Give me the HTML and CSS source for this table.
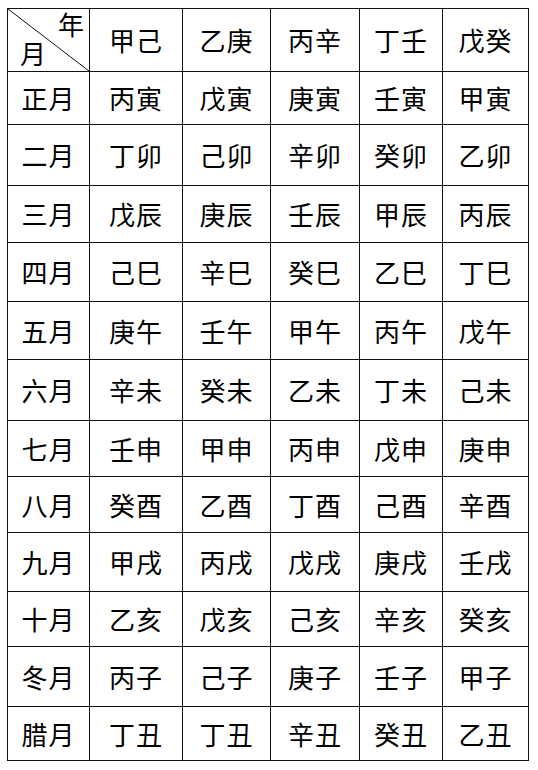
FILE: index.html
```html
<!DOCTYPE html>
<html lang="zh-CN">
<head>
<meta charset="utf-8">
<title>月干支表</title>
<link rel="stylesheet" href="styles.css">
</head>
<body>
<table class="grid">
  <colgroup>
    <col class="c1"><col class="c2"><col class="c3"><col class="c4"><col class="c5"><col class="c6">
  </colgroup>
  <tbody>
    <tr>
      <td class="corner">
        <svg class="diag" viewBox="0 0 100 100" preserveAspectRatio="none" aria-hidden="true"><line x1="0" y1="0" x2="100" y2="100" vector-effect="non-scaling-stroke"/></svg>
        <div class="corner-labels"><span class="year">年</span><span class="month">月</span></div>
      </td>
      <td>甲己</td><td>乙庚</td><td>丙辛</td><td>丁壬</td><td>戊癸</td>
    </tr>
    <tr><td>正月</td><td>丙寅</td><td>戊寅</td><td>庚寅</td><td>壬寅</td><td>甲寅</td></tr>
    <tr><td>二月</td><td>丁卯</td><td>己卯</td><td>辛卯</td><td>癸卯</td><td>乙卯</td></tr>
    <tr><td>三月</td><td>戊辰</td><td>庚辰</td><td>壬辰</td><td>甲辰</td><td>丙辰</td></tr>
    <tr><td>四月</td><td>己巳</td><td>辛巳</td><td>癸巳</td><td>乙巳</td><td>丁巳</td></tr>
    <tr><td>五月</td><td>庚午</td><td>壬午</td><td>甲午</td><td>丙午</td><td>戊午</td></tr>
    <tr><td>六月</td><td>辛未</td><td>癸未</td><td>乙未</td><td>丁未</td><td>己未</td></tr>
    <tr><td>七月</td><td>壬申</td><td>甲申</td><td>丙申</td><td>戊申</td><td>庚申</td></tr>
    <tr><td>八月</td><td>癸酉</td><td>乙酉</td><td>丁酉</td><td>己酉</td><td>辛酉</td></tr>
    <tr><td>九月</td><td>甲戌</td><td>丙戌</td><td>戊戌</td><td>庚戌</td><td>壬戌</td></tr>
    <tr><td>十月</td><td>乙亥</td><td>戊亥</td><td>己亥</td><td>辛亥</td><td>癸亥</td></tr>
    <tr><td>冬月</td><td>丙子</td><td>己子</td><td>庚子</td><td>壬子</td><td>甲子</td></tr>
    <tr><td>腊月</td><td>丁丑</td><td>丁丑</td><td>辛丑</td><td>癸丑</td><td>乙丑</td></tr>
  </tbody>
</table>
</body>
</html>
```
FILE: styles.css
```css
html, body {
  margin: 0;
  padding: 0;
  background: #ffffff;
}

body {
  padding: 8px 0 0 7px;
  font-family: "Noto Sans CJK SC", "Noto Sans CJK JP", sans-serif;
  color: #000;
}

.grid {
  border-collapse: collapse;
  table-layout: fixed;
  width: 521px;
}

.grid td {
  border: 1px solid #111;
  padding: 0;
  text-align: center;
  vertical-align: middle;
  font-size: 26px;
  line-height: 1;
  letter-spacing: 1px;
  white-space: nowrap;
}

.c1 { width: 82px; }
.c2 { width: 93px; }
.c3 { width: 88px; }
.c4 { width: 89px; }
.c5 { width: 83px; }
.c6 { width: 86px; }

.grid tr:nth-child(1)  { height: 63px; }
.grid tr:nth-child(2)  { height: 53px; }
.grid tr:nth-child(3)  { height: 61px; }
.grid tr:nth-child(4)  { height: 57px; }
.grid tr:nth-child(5)  { height: 59px; }
.grid tr:nth-child(6)  { height: 58px; }
.grid tr:nth-child(7)  { height: 61px; }
.grid tr:nth-child(8)  { height: 56px; }
.grid tr:nth-child(9)  { height: 56px; }
.grid tr:nth-child(10) { height: 59px; }
.grid tr:nth-child(11) { height: 55px; }
.grid tr:nth-child(12) { height: 60px; }
.grid tr:nth-child(13) { height: 54px; }

.grid td.corner {
  position: relative;
  padding: 0;
}

.diag {
  position: absolute;
  left: 0;
  top: 0;
  width: 100%;
  height: 100%;
}

.diag line {
  stroke: #111;
  stroke-width: 1;
}

.corner-labels {
  display: flex;
  flex-direction: column;
  justify-content: space-between;
  height: 62px;
  padding: 2px 5px 5px 12px;
  box-sizing: border-box;
}

.year {
  align-self: flex-end;
  letter-spacing: 0;
}

.month {
  align-self: flex-start;
  letter-spacing: 0;
}
```
